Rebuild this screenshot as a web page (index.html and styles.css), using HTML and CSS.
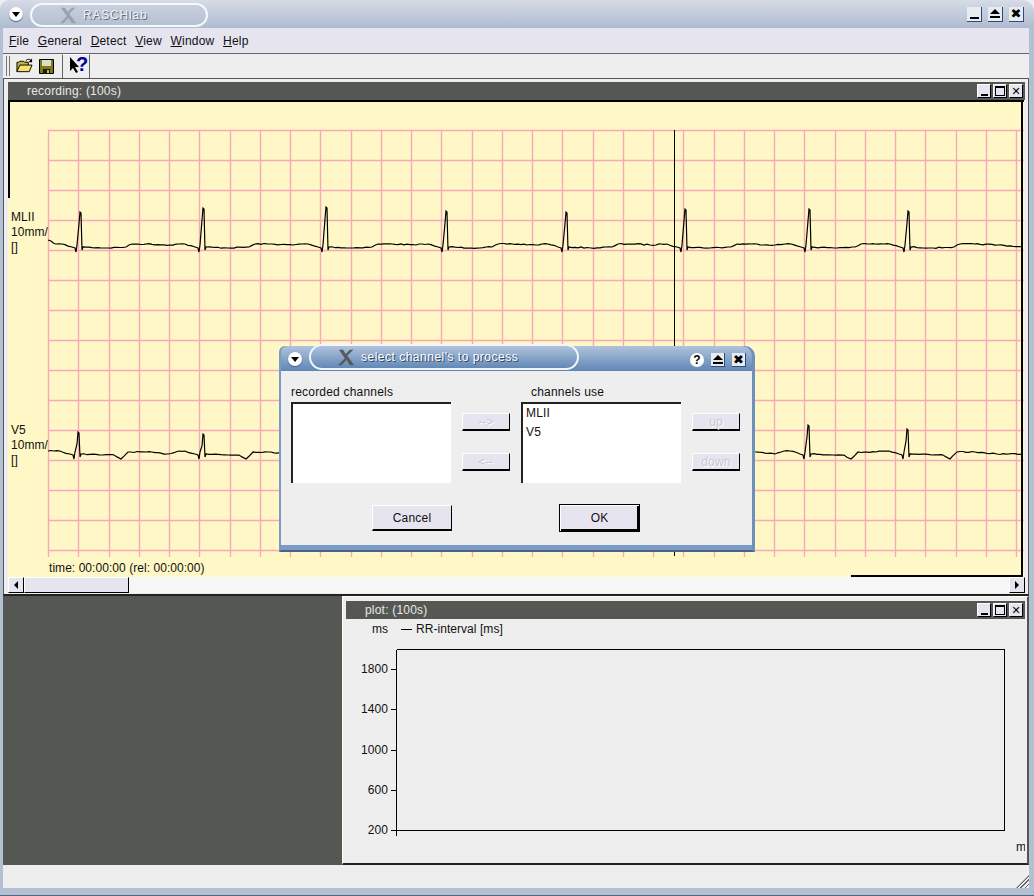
FILE: index.html
```html
<!DOCTYPE html>
<html lang="en">
<head>
<meta charset="UTF-8"/>
<title>RASCHlab</title>
<link rel="stylesheet" href="styles.css">
</head>
<body>
<div class="app">
  <div class="titlebar">
    <span class="menu-dot"></span>
    <div class="pill">
      <svg class="xlogo" viewBox="0 0 20 18"><path d="M1 0h5l3 5 5-5h4l-7 7 8 11h-5l-4-6-6 6H0l8-8z" fill="#9aa3ad"/></svg>
      <span class="pill-text">RASCHlab</span>
    </div>
    <div class="wm-buttons">
      <span class="wm-btn"><i class="glyph-min"></i></span>
      <span class="wm-btn"><i class="glyph-shade"></i></span>
      <span class="wm-btn wm-x">&#10006;</span>
    </div>
  </div>
  <div class="frame">
    <div class="menubar">
      <span><u>F</u>ile</span>
      <span><u>G</u>eneral</span>
      <span><u>D</u>etect</span>
      <span><u>V</u>iew</span>
      <span><u>W</u>indow</span>
      <span><u>H</u>elp</span>
    </div>
    <div class="toolbar">
      <span class="grip"></span>
      <svg class="tool" width="17" height="16" viewBox="0 0 18 16">
        <path d="M1 14V4h2l1-1h4l1 1h4v3" fill="#c9b13c" stroke="#000"/>
        <path d="M1 14l3-7h13l-3 7z" fill="#f3e36a" stroke="#000"/>
        <path d="M10 3c1-2 4-3 6-1" fill="none" stroke="#000"/>
        <path d="M17 0v4h-4z" fill="#000"/>
      </svg>
      <svg class="tool" width="15" height="15" viewBox="0 0 15 15">
        <path d="M.5.5h14v14H.5z" fill="#807a12" stroke="#000"/>
        <path d="M3 1h9v6H3z" fill="#dcdcc8"/>
        <path d="M4 10h7v5H4z" fill="#1c1c0c"/>
        <path d="M8 11h2v3H8z" fill="#bdbb80"/>
      </svg>
      <span class="tool-box">
        <svg width="12" height="21" viewBox="0 0 12 21">
          <path d="M1 1v14l3-3 3 5 2-1-3-5h4z" fill="#000"/>
        </svg>
        <span class="help-mark">?</span>
      </span>
    </div>
    <div class="workspace">
      <section class="recording">
        <div class="sub-title">
          <span>recording: (100s)</span>
          <div class="sub-buttons">
            <span class="sub-btn"><i class="glyph-min"></i></span>
            <span class="sub-btn"><i class="glyph-max"></i></span>
            <span class="sub-btn sub-x">&#10005;</span>
          </div>
        </div>
        <svg id="ecg" class="chart ecg" width="1016" height="477" viewBox="8 100 1016 477">
          <g id="grid"></g>
          <polyline id="ch1" class="trace" points=""/>
          <polyline id="ch2" class="trace" points=""/>
          <path class="cursor" d="M674.5 130V556"/>
          <path class="edge" d="M8 101H1024M9 100V198M1022 100V576M851 575.5H1023"/>
          <text x="11" y="221">MLII</text>
          <text x="11" y="236">10mm/</text>
          <text x="11" y="251">[]</text>
          <text x="11" y="434">V5</text>
          <text x="11" y="449">10mm/</text>
          <text x="11" y="464">[]</text>
          <text x="49" y="572">time: 00:00:00 (rel: 00:00:00)</text>
        </svg>
        <div class="scrollbar">
          <span class="scroll-btn"><i class="arrow-left"></i></span>
          <span class="scroll-thumb"></span>
          <span class="scroll-btn"><i class="arrow-right"></i></span>
        </div>
      </section>
      <div class="lower">
        <div class="empty-area"></div>
        <section class="plot">
          <div class="sub-title">
            <span>plot: (100s)</span>
            <div class="sub-buttons">
              <span class="sub-btn"><i class="glyph-min"></i></span>
              <span class="sub-btn"><i class="glyph-max"></i></span>
              <span class="sub-btn sub-x">&#10005;</span>
            </div>
          </div>
          <svg class="chart" width="679" height="243" viewBox="346 619 679 243">
            <text x="372" y="633">ms</text>
            <path class="axis" d="M401 629.5H412"/>
            <text x="416" y="633">RR-interval [ms]</text>
            <path class="axis" d="M396.5 649.5H1004.5V830.5H391M396.5 649.5V836M391 669.5h5M391 709.5h5M391 750.5h5M391 790.5h5"/>
            <text class="tick" x="388" y="673">1800</text>
            <text class="tick" x="388" y="713">1400</text>
            <text class="tick" x="388" y="754">1000</text>
            <text class="tick" x="388" y="794">600</text>
            <text class="tick" x="388" y="834">200</text>
            <text x="1016" y="851">m</text>
          </svg>
        </section>
      </div>
    </div>
    <div class="statusbar"><span class="size-grip"></span></div>
  </div>
  <div class="bottom-strip"></div>

  <div class="dialog">
    <div class="dlg-title">
      <span class="menu-dot"></span>
      <div class="dlg-pill">
        <svg class="xlogo" viewBox="0 0 20 18"><path d="M1 0h5l3 5 5-5h4l-7 7 8 11h-5l-4-6-6 6H0l8-8z" fill="#555a60"/></svg>
        <span>select channel's to process</span>
      </div>
      <div class="dlg-buttons">
        <span class="help-btn">?</span>
        <span class="wm-btn small"><i class="glyph-shade"></i></span>
        <span class="wm-btn small wm-x">&#10006;</span>
      </div>
    </div>
    <div class="dlg-body">
      <div class="dlg-row">
        <div class="col-list">
          <label class="list-label">recorded channels</label>
          <div class="listbox"></div>
        </div>
        <div class="col-btns">
          <button class="btn-small" disabled>--&gt;</button>
          <button class="btn-small" disabled>&lt;--</button>
        </div>
        <div class="col-list">
          <label class="list-label indent">channels use</label>
          <div class="listbox">
            <div>MLII</div>
            <div>V5</div>
          </div>
        </div>
        <div class="col-btns">
          <button class="btn-small" disabled>up</button>
          <button class="btn-small" disabled>down</button>
        </div>
      </div>
      <div class="dlg-footer">
        <button class="btn-big">Cancel</button>
        <button class="btn-big btn-default">OK</button>
      </div>
    </div>
    <div class="dlg-strip"></div>
  </div>
</div>
<script src="chart.js"></script>
</body>
</html>
```

FILE: styles.css
```css
*{
 box-sizing: border-box;
}
html, body{
 margin: 0;
 padding: 0;
 background: #eeeeee;
}
body{
 font-family: "Liberation Sans", Arial, sans-serif;
 font-size: 12px;
 letter-spacing: 0.2px;
 color: #111;
}
.app{
 position: relative;
 width: 1034px;
 height: 896px;
 display: flex;
 flex-direction: column;
 overflow: hidden;
}

/* main window title */
.titlebar{
 height: 28px;
 flex: none;
 display: flex;
 align-items: center;
 padding: 0 10px 0 9px;
 border-radius: 9px 12px 0 0;
 background: linear-gradient(#d6dce6, #aebbd0);
}
.menu-dot{
 position: relative;
 display: block;
 width: 14px;
 height: 14px;
 flex: none;
 border-radius: 50%;
 background: #fff;
 box-shadow: 0 1px 1px #47638c;
}
.menu-dot:after{
 content: "";
 position: absolute;
 left: 3px;
 top: 5px;
 border-style: solid;
 border-width: 5px 4px 0 4px;
 border-color: #000 transparent transparent transparent;
}
.pill{
 display: flex;
 align-items: center;
 width: 178px;
 height: 24px;
 margin: 2px 0 0 7px;
 padding-left: 28px;
 border: 2px solid #f6f8fb;
 border-radius: 13px;
 background: linear-gradient(#c8d0de, #b4c0d3);
}
.pill-text{
 margin-left: 6px;
 color: #eef1f5;
 text-shadow: 1px 1px 0 #5d6673;
 letter-spacing: 0.8px;
}
.xlogo{
 width: 17px;
 height: 17px;
 flex: none;
}
.wm-buttons{
 margin-left: auto;
 display: flex;
 gap: 6px;
}
.wm-btn{
 position: relative;
 display: flex;
 align-items: center;
 justify-content: center;
 width: 15px;
 height: 15px;
 color: #000;
 background: #e9ebf3;
 border-right: 1px solid #2e4b78;
 border-bottom: 1px solid #2e4b78;
 font-size: 12px;
 line-height: 1;
 letter-spacing: 0;
}
.wm-btn.small{
 width: 14px;
 height: 14px;
}
.wm-x{
 font-family: "DejaVu Sans", sans-serif;
 font-size: 13px;
}
.glyph-min{
 display: block;
 width: 9px;
 height: 2px;
 margin-top: 8px;
 background: #000;
}
.glyph-shade{
 display: block;
 width: 10px;
 height: 9px;
 background: linear-gradient(#000, #000) bottom / 100% 2px no-repeat;
 position: relative;
}
.glyph-shade:before{
 content: "";
 position: absolute;
 left: 0;
 top: 0;
 border-style: solid;
 border-width: 0 5px 5px 5px;
 border-color: transparent transparent #000 transparent;
}
.glyph-max{
 display: block;
 width: 10px;
 height: 10px;
 border: 1px solid #000;
 border-top-width: 2px;
}

/* frame around everything under the title */
.frame{
 flex: 1;
 min-height: 0;
 display: flex;
 flex-direction: column;
 border-left: 3px solid #b3bfd3;
 border-right: 5px solid #b3bfd3;
}
.menubar{
 height: 26px;
 flex: none;
 display: flex;
 align-items: center;
 gap: 8.7px;
 padding: 1px 0 0 6px;
 background: #e6e4ef;
 border-bottom: 1px solid #666;
}
.toolbar{
 height: 24px;
 flex: none;
 display: flex;
 align-items: center;
 padding-left: 3px;
 background: #eeeeee;
}
.grip{
 display: block;
 width: 4px;
 height: 20px;
 margin-right: 6px;
 border-left: 1px solid #777;
 border-right: 1px solid #777;
}
.tool{
 flex: none;
 margin-right: 6px;
}
.tool + .tool{
 margin-right: 8px;
}
.tool-box{
 position: relative;
 display: flex;
 align-items: center;
 height: 24px;
 width: 28px;
 padding-left: 6px;
 border-left: 1px solid #666;
 border-right: 1px solid #666;
 border-top: 1px solid #fff;
}
.help-mark{
 position: absolute;
 left: 13px;
 top: -3px;
 font-size: 20px;
 line-height: 24px;
 font-weight: bold;
 color: #0000a8;
 letter-spacing: 0;
}

/* workspace */
.workspace{
 flex: 1;
 min-height: 0;
 display: flex;
 flex-direction: column;
}
.recording{
 height: 518px;
 flex: none;
 padding: 3px 3px 1px 4px;
 border-top: 1px solid #555;
 border-left: 1px solid #555;
 border-right: 1px solid #555;
 border-bottom: 2px solid #222;
 background: #eeeeee;
}
.sub-title{
 position: relative;
 height: 18px;
 display: flex;
 align-items: center;
 padding-left: 19px;
 color: #e8e8e8;
 background: #555753;
}
.sub-buttons{
 margin-left: auto;
 margin-right: 2px;
 display: flex;
 gap: 2px;
}
.sub-btn{
 display: flex;
 align-items: center;
 justify-content: center;
 width: 14px;
 height: 14px;
 color: #000;
 background: #e6e4ef;
 border-top: 1px solid #fff;
 border-left: 1px solid #fff;
 border-right: 1px solid #000;
 border-bottom: 1px solid #000;
 font-family: "DejaVu Sans", sans-serif;
 font-size: 11px;
 letter-spacing: 0;
 line-height: 1;
}
.sub-btn .glyph-min{
 width: 7px;
 margin-top: 7px;
}
.chart{
 display: block;
}
.chart text{
 font-size: 12px;
 letter-spacing: 0.05px;
 fill: #111;
}
.chart .tick{
 text-anchor: end;
}
.ecg{
 background: #fff8c6;
}
.grid-line{
 fill: none;
 stroke: #f8a9b9;
 stroke-width: 1.4;
}
.trace{
 fill: none;
 stroke: #000;
 stroke-width: 1.2;
}
.cursor{
 stroke: #000;
 stroke-width: 1;
 shape-rendering: crispEdges;
}
.edge{
 fill: none;
 stroke: #000;
 stroke-width: 2;
 shape-rendering: crispEdges;
}
.axis{
 fill: none;
 stroke: #000;
 stroke-width: 1;
 shape-rendering: crispEdges;
}
.scrollbar{
 height: 16px;
 display: flex;
 background: repeating-conic-gradient(#f2f2f2 0 25%, #fbfbfb 0 50%) 0 0 / 2px 2px;
}
.scroll-btn, .scroll-thumb{
 display: flex;
 align-items: center;
 justify-content: center;
 background: #e6e4ef;
 border-top: 1px solid #fff;
 border-left: 1px solid #fff;
 border-right: 1px solid #000;
 border-bottom: 1px solid #000;
}
.scroll-btn{
 width: 16px;
}
.scroll-btn:last-child{
 margin-left: auto;
}
.scroll-thumb{
 width: 105px;
}
.arrow-left{
 border-style: solid;
 border-width: 4px 4px 4px 0;
 border-color: transparent #000 transparent transparent;
}
.arrow-right{
 border-style: solid;
 border-width: 4px 0 4px 4px;
 border-color: transparent transparent transparent #000;
}
.lower{
 flex: 1;
 min-height: 0;
 display: flex;
}
.empty-area{
 width: 339px;
 flex: none;
 background: #555753;
}
.plot{
 flex: 1;
 padding: 4px 2px 0 3px;
 border-top: 1px solid #fff;
 border-left: 1px solid #fff;
 border-right: 2px solid #555;
 border-bottom: 2px solid #222;
 background: #eeeeee;
}
.statusbar{
 position: relative;
 height: 23px;
 flex: none;
 background: #eeeeee;
}
.size-grip{
 position: absolute;
 right: 0;
 bottom: 0;
 width: 13px;
 height: 13px;
 clip-path: polygon(100% 0, 100% 100%, 0 100%);
 background: repeating-linear-gradient(135deg, #666 0 1px, #eee 1px 3px);
}
.bottom-strip{
 height: 8px;
 flex: none;
 background: #b3bfd3;
 border-bottom: 1px solid #56627a;
}

/* dialog */
.dialog{
 position: absolute;
 left: 279px;
 top: 346px;
 width: 476px;
 height: 206px;
 display: flex;
 flex-direction: column;
 border-radius: 6px 10px 0 0;
 background: #6e90ba;
 border-left: 2px solid #7b9ac2;
 border-right: 3px solid #6e90ba;
 border-bottom: 2px solid #47638c;
}
.dlg-title{
 position: relative;
 height: 25px;
 flex: none;
 display: flex;
 align-items: center;
 padding: 1px 6px 0 7px;
 border-radius: 6px 10px 0 0;
 background: linear-gradient(#afc3dc, #5f86b4);
}
.dlg-pill{
 position: absolute;
 left: 28px;
 top: -2px;
 width: 270px;
 height: 26px;
 display: flex;
 align-items: center;
 padding-left: 27px;
 color: #fff;
 border: 2px solid #f2f5f9;
 border-radius: 13px;
 background: linear-gradient(#afc3dc, #6388b5);
}
.dlg-pill span{
 margin-left: 6px;
 letter-spacing: 0.5px;
 text-shadow: 1px 1px 0 #2f4668;
}
.dlg-buttons{
 margin-left: auto;
 margin-top: 2px;
 display: flex;
 align-items: center;
 gap: 7px;
}
.help-btn{
 display: block;
 width: 14px;
 height: 14px;
 text-align: center;
 font-size: 12px;
 line-height: 14px;
 font-weight: bold;
 letter-spacing: 0;
 color: #000;
 border-radius: 50%;
 background: #fff;
}
.dlg-body{
 flex: 1;
 padding: 14px 0 0 10px;
 background: #eeeeee;
}
.dlg-row{
 display: flex;
 gap: 11px;
}
.col-list{
 width: 160px;
}
.list-label{
 display: block;
 height: 17px;
 line-height: 15px;
}
.list-label.indent{
 padding-left: 10px;
}
.listbox{
 height: 81px;
 padding: 0 0 0 3px;
 background: #fff;
 border-top: 2px solid #222;
 border-left: 2px solid #222;
 line-height: 19px;
}
.col-btns{
 width: 48px;
 padding-top: 28px;
 display: flex;
 flex-direction: column;
 gap: 22px;
}
.btn-small, .btn-big{
 display: block;
 padding: 0;
 font: inherit;
 letter-spacing: inherit;
 color: #111;
 background: #e6e4ef;
 border-top: 1px solid #fff;
 border-left: 1px solid #fff;
 border-right: 1px solid #000;
 border-bottom: 2px solid #000;
}
.btn-small{
 width: 48px;
 height: 18px;
}
.btn-small:disabled{
 color: #c8c6cf;
 text-shadow: 1px 1px 0 #fff;
}
.dlg-footer{
 display: flex;
 align-items: center;
 height: 28px;
 margin-top: 21px;
 padding-left: 81px;
 gap: 107px;
}
.btn-big{
 width: 80px;
 height: 26px;
}
.btn-default{
 width: 81px;
 height: 28px;
 border: 1px solid #000;
 box-shadow: inset 1px 1px 0 #fff, inset -2px -2px 0 #000;
}
.dlg-strip{
 height: 5px;
 flex: none;
 background: #7c9cc4;
}
```

FILE: chart.js
```js
var NS = "http://www.w3.org/2000/svg";
var seed = 7;

function rnd() {
 seed = (seed * 16807) % 2147483647;
 return seed / 2147483647;
}

// pink grid of the recording window
function drawGrid() {
 var g = document.getElementById("grid");
 var d = "";
 var y, x;
 for (y = 130; y <= 550; y += 30) {
  d += "M48 " + (y + 0.5) + "H1024";
 }
 for (x = 48; x < 1024; x += 30.25) {
  d += "M" + (Math.round(x) + 0.5) + " 130V557";
 }
 var p = document.createElementNS(NS, "path");
 p.setAttribute("d", d);
 p.setAttribute("class", "grid-line");
 g.appendChild(p);
}

// one ecg channel, knots for each beat then a little noise between them
function drawTrace(id, base, beats, start, dip, wave) {
 var knots = [[48, start]];
 beats.forEach(function (b, n) {
  var r = b[0], top = b[1];
  var next = n + 1 < beats.length ? beats[n + 1][0] : 2000;
  knots.push([r - 24, base - 3], [r - 18, base - 3], [r - 8, base], [r - 5, base + 1],
   [r - 4, base + dip], [r - 3, base - 2], [r - 1, top + 12], [r, top], [r + 1, top + 1], [r + 2, base + 3], [r + 3, base]);
  // after the spike: t wave, left out when the next beat comes close
  wave.forEach(function (k) {
   if (r + k[0] < next - 26 && r + k[0] < 1024) knots.push([r + k[0], base + k[1]]);
  });
 });
 knots.push([1024, base]);
 var pts = [];
 for (var i = 0; i < knots.length - 1; i++) {
  var a = knots[i], c = knots[i + 1];
  pts.push(a[0] + "," + a[1]);
  if (c[0] - a[0] > 4) {
   for (var x = a[0] + 3; x < c[0] - 1; x += 3) {
    var t = (x - a[0]) / (c[0] - a[0]);
    var y = a[1] + (c[1] - a[1]) * t + (rnd() - 0.5) * 1.1;
    pts.push(x + "," + y.toFixed(1));
   }
  }
 }
 document.getElementById(id).setAttribute("points", pts.join(" "));
}

drawGrid();
drawTrace("ch1", 247, [[80, 212], [203, 208], [326, 207], [446, 211], [566, 212], [685, 209], [809, 209], [908, 211]], 240, 5,
 [[25, 1], [46, 0], [52, -3], [66, -3], [90, -2]]);
drawTrace("ch2", 454, [[78, 432], [203, 434], [326, 430], [446, 430], [566, 430], [685, 430], [808, 425], [907, 429]], 451, 5,
 [[25, 1], [36, 1], [43, 5], [50, -2], [68, -2], [90, 0]]);
```
